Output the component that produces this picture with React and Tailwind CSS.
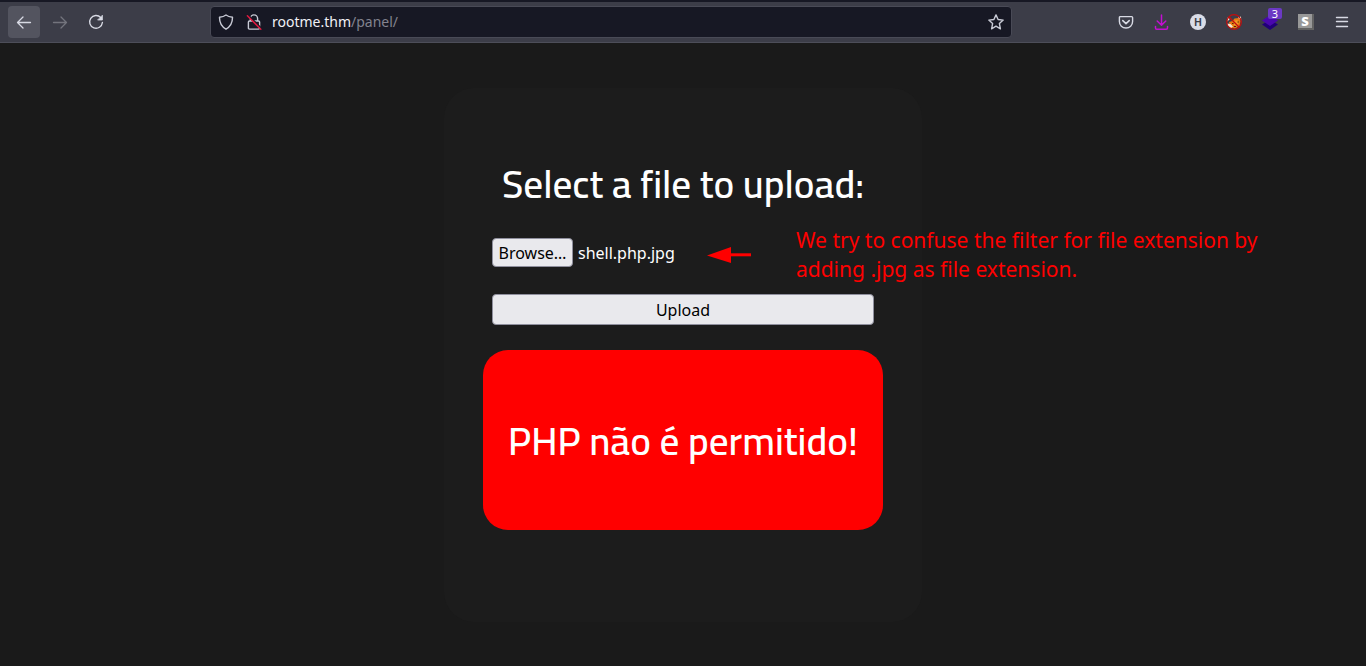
import React from "react";

function ToolbarButton({ label, active, disabled, children }) {
  return (
    <button
      type="button"
      aria-label={label}
      disabled={disabled}
      className={
        "relative flex h-8 w-8 shrink-0 items-center justify-center rounded " +
        (active ? "bg-[#53545f] " : "") +
        (disabled ? "text-[#73747d]" : "text-[#d8dae4]")
      }
    >
      {children}
    </button>
  );
}

function Stroke({ size = 16, width = 1.3, children }) {
  return (
    <svg
      width={size}
      height={size}
      viewBox="0 0 16 16"
      fill="none"
      stroke="currentColor"
      strokeWidth={width}
      strokeLinecap="round"
      strokeLinejoin="round"
      aria-hidden="true"
    >
      {children}
    </svg>
  );
}

function Toolbar() {
  return (
    <header className="flex h-[43px] items-center justify-between border-t-2 border-b border-t-[#171824] border-b-[#4d4e59] bg-[#3c3d48] px-2">
      <nav className="flex gap-1" aria-label="Navigation">
        <ToolbarButton label="Back" active>
          <Stroke>
            <path d="M14.5 8.5H1.5M7 3L1.5 8.5L7 14" />
          </Stroke>
        </ToolbarButton>
        <ToolbarButton label="Forward" disabled>
          <Stroke>
            <path d="M1.5 8.5H14.5M9 3L14.5 8.5L9 14" />
          </Stroke>
        </ToolbarButton>
        <ToolbarButton label="Reload">
          <Stroke width={1.4}>
            <path d="M12.8 3.6A6.4 6.4 0 1 0 14.4 8.5" />
            <path d="M14.4 1.6V6H10Z" fill="currentColor" strokeWidth="0.8" />
          </Stroke>
        </ToolbarButton>
      </nav>

      <div className="flex h-8 w-full max-w-[802px] items-center rounded border border-[#494a56] bg-[#171824] px-[7px] text-[#c9cbd6]">
        <Stroke width={1.4}>
          <path d="M8 1C6.2 2.4 4 3 1.5 3.2C1.4 8.3 3.4 12.6 8 15.2C12.6 12.6 14.6 8.3 14.5 3.2C12 3 9.8 2.4 8 1Z" />
        </Stroke>
        <span className="ml-3 flex">
          <Stroke width={1.4}>
            <path d="M4.4 7V4.5a3.6 3.6 0 0 1 7.2 0V7M3.5 7H12.5Q13.6 7 13.6 8.1V14Q13.6 15.1 12.5 15.1H3.5Q2.4 15.1 2.4 14V8.1Q2.4 7 3.5 7Z" />
            <path d="M2.6 1.6L15.4 14.2" stroke="#171824" strokeWidth="1.6" />
            <path d="M1.4 1.8L14.8 15.2" stroke="#e0183f" strokeWidth="1.5" />
          </Stroke>
        </span>
        <a
          href="#panel"
          className="ml-[10px] flex-1 font-['Noto_Sans'] text-[14px] leading-5 text-[#f0f0f6]"
        >
          rootme.thm<span className="text-[#82838e]">/panel/</span>
        </a>
        <button type="button" aria-label="Bookmark this page">
          <Stroke width={1.4}>
            <path d="M8 .9L10.1 5.5L15.2 6.1L11.4 9.6L12.4 14.8L8 12.2L3.6 14.8L4.6 9.6L.8 6.1L5.9 5.5Z" />
          </Stroke>
        </button>
      </div>

      <div className="flex gap-1">
        <ToolbarButton label="Save to Pocket">
          <Stroke width={1.4}>
            <path d="M2.4 2.6H13.6Q14.6 2.6 14.6 3.6V7.6C14.6 11.4 11.7 14 8 14S1.4 11.4 1.4 7.6V3.6Q1.4 2.6 2.4 2.6Z" />
            <path d="M4.8 6.6L8 9.6L11.2 6.6" strokeWidth="1.6" />
          </Stroke>
        </ToolbarButton>
        <ToolbarButton label="Downloads">
          <span className="flex text-[#c30fd2]">
            <Stroke width={1.5}>
              <path d="M7.5 1V11M3.2 7L7.5 11.2L11.8 7M1.5 12.6V14Q1.5 15.2 2.7 15.2H12.3Q13.5 15.2 13.5 14V12.6" />
            </Stroke>
          </span>
        </ToolbarButton>
        <ToolbarButton label="HackTools">
          <span className="flex h-4 w-4 items-center justify-center rounded-full bg-[#dadde8] font-['Inter'] text-[10px] leading-4 font-bold text-[#3c3d48]">
            H
          </span>
        </ToolbarButton>
        <ToolbarButton label="FoxyProxy">
          <svg width="16" height="16" viewBox="0 0 16 16" aria-hidden="true">
            <path d="M3 8L6.5 7L8.5 4.5L13 4L14.6 7L13.5 12L9 14.6L4 13.5Z" fill="#e87912" />
            <path d="M1 9.5L4.5 10L7 12.5L5 14L2 12Z" fill="#f4e6d2" />
            <path d="M12 3.5L15 2.6L15.2 6.4Z M1 3.4L3.8 5L1.4 7.4Z" fill="#f4e6d2" />
            <path d="M8 7L11 6L13 8L11 12L8 11Z" fill="#f59a27" />
            <path d="M6 9.5h1.5M11.5 8H13M8 12.5h2" stroke="#52270a" strokeWidth="1" />
            <circle cx="8" cy="8" r="7.3" fill="none" stroke="#c40d0d" strokeWidth="1.2" />
            <path d="M2.8 2.8L13.2 13.2" stroke="#c40d0d" strokeWidth="1.3" />
          </svg>
        </ToolbarButton>
        <ToolbarButton label="Wappalyzer">
          <svg width="16" height="16" viewBox="0 0 16 16" aria-hidden="true">
            <path d="M0 10.5L8 5.5L16 10.5L8 16Z" fill="#210078" />
            <path d="M0 6.5L8 1L16 6.5L8 12Z" fill="#4907ad" />
          </svg>
          <span className="absolute top-[2px] right-1 flex h-[11px] w-[14px] items-center justify-center rounded-[2px] bg-[#6b39c4] font-['Noto_Sans'] text-[11px] leading-[11px] text-white">
            3
          </span>
        </ToolbarButton>
        <ToolbarButton label="Shodan">
          <span className="flex h-4 w-4 border-r-2 border-b-2 border-[#636363] bg-[#999]">
            <span className="flex flex-1 items-center justify-center font-['Open_Sans'] text-[13px] leading-[14px] font-extrabold text-white">
              S
            </span>
          </span>
        </ToolbarButton>
        <ToolbarButton label="Menu">
          <Stroke width={1.4}>
            <path d="M2.5 3.5H13.5M2.5 7.5H13.5M2.5 12.5H13.5" />
          </Stroke>
        </ToolbarButton>
      </div>
    </header>
  );
}

export default function App() {
  return (
    <div className="flex min-h-screen flex-col bg-[#1a1a1a] font-['Noto_Sans',sans-serif]">
      <Toolbar />
      <main className="flex flex-1 justify-center pt-[45px] pb-11">
        <section className="flex w-full max-w-[478px] flex-col items-center rounded-[30px] bg-[#1c1c1c] px-[39px] pt-[66px] pb-[92px]">
          <form
            className="flex w-full max-w-[382px] flex-col"
            onSubmit={(e) => e.preventDefault()}
          >
            <h1 className="text-center font-['Cairo','Titillium_Web','Noto_Sans',sans-serif] text-[39px] leading-[60px] font-semibold whitespace-nowrap text-white">
              Select a file to upload:
            </h1>
            <div className="relative mt-6 flex items-center text-[16px] leading-[22px]">
              <input id="file" type="file" className="peer sr-only" />
              <label
                htmlFor="file"
                className="flex h-[29px] w-[81px] items-center justify-center rounded border border-[#8f8f9d] bg-[#e9e9ed] text-black"
              >
                Browse…
              </label>
              <span className="ml-[5px] text-white">shell.php.jpg</span>
              <svg
                className="absolute top-[9px] left-[215px]"
                width="44"
                height="16"
                viewBox="0 0 44 16"
                aria-hidden="true"
              >
                <path d="M0 8.5L24 0V16Z" fill="#f00" />
                <path d="M23 7.8H44" stroke="#f00" strokeWidth="3" />
              </svg>
              <p className="absolute -top-3 left-[304px] w-[480px] text-[21px] leading-[29px] text-[#f00]">
                We try to confuse the filter for file extension by
                <br />
                adding .jpg as file extension.
              </p>
            </div>
            <button
              type="submit"
              className="mt-[27px] h-[31px] rounded border border-[#8f8f9d] bg-[#e9e9ed] text-[16px] leading-[22px] text-black"
            >
              Upload
            </button>
          </form>
          <div
            role="alert"
            className="mt-[25px] flex h-[180px] w-full items-center justify-center rounded-[25px] bg-[#f00] pt-[2px] font-['Cairo','Titillium_Web','Noto_Sans',sans-serif] text-[39px] leading-[60px] font-semibold whitespace-nowrap text-white"
          >
            PHP não é permitido!
          </div>
        </section>
      </main>
    </div>
  );
}
